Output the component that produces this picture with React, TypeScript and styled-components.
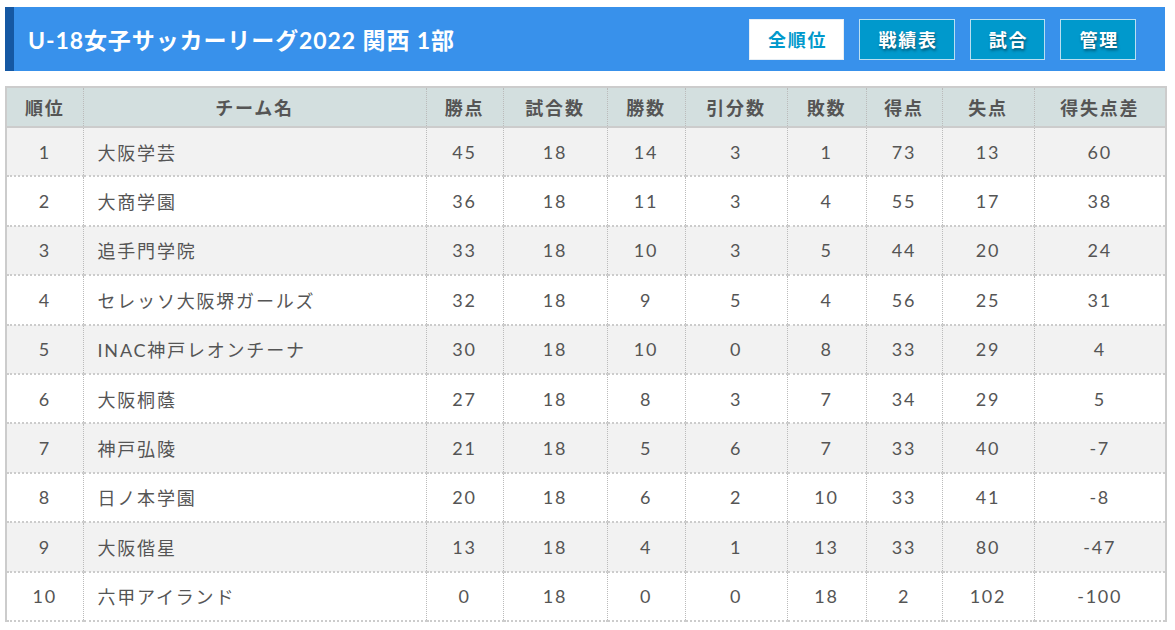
import React from 'react';
import styled, { createGlobalStyle } from 'styled-components';

const GlobalStyle = createGlobalStyle`
  body {
    margin: 0;
    background: #fff;
    font-family: Lato, "Noto Sans CJK JP", sans-serif;
  }
`;

const Page = styled.div`
  padding: 7px 10px 0 5px;
  width: 1160px;
`;

const TitleBar = styled.div`
  display: flex;
  align-items: center;
  justify-content: space-between;
  height: 64px;
  background: #3891eb;
  border-left: 9px solid #1558a3;
  padding: 0 29px 0 14px;
`;

const Title = styled.h1`
  margin: 0;
  color: #fff;
  font-size: 23px;
  font-weight: 700;
  letter-spacing: 0.9px;
`;

const Nav = styled.div`
  display: flex;
  gap: 15px;
`;

const NavButton = styled.a<{ $active?: boolean }>`
  display: flex;
  align-items: center;
  justify-content: center;
  height: 41px;
  padding: 0 16px 0 18px;
  box-sizing: border-box;
  font-size: 18px;
  font-weight: 700;
  letter-spacing: 1.8px;
  border: 1px solid ${(p) => (p.$active ? '#e6eef5' : '#b8dff2')};
  background: ${(p) => (p.$active ? '#fff' : '#0099cc')};
  color: ${(p) => (p.$active ? '#0099cc' : '#fff')};
  text-shadow: ${(p) => (p.$active ? 'none' : '1px 2px 3px rgba(0,0,0,0.45)')};
`;

const Table = styled.table`
  margin-top: 15px;
  width: 1160px;
  table-layout: fixed;
  border-collapse: collapse;
  border: 2px solid #cccccc;
  border-bottom: none;
  color: #555;
  font-size: 18px;
  letter-spacing: 1.8px;
`;

const HeadCell = styled.th`
  height: 38px;
  padding: 0;
  background: #d3dfdf;
  font-weight: 700;
  text-align: center;
  border-bottom: 2px solid #cccccc;
  border-left: 1px dotted #bbbbbb;
  &:first-child { border-left: none; }
`;

const Row = styled.tr<{ $odd: boolean }>`
  background: ${(p) => (p.$odd ? '#f2f2f2' : '#ffffff')};
`;

const Cell = styled.td<{ $left?: boolean }>`
  height: 47.4px;
  padding: 0 0 0 ${(p) => (p.$left ? '14px' : '0')};
  text-align: ${(p) => (p.$left ? 'left' : 'center')};
  border-bottom: 2px dotted #cccccc;
  border-left: 1px dotted #bbbbbb;
  &:first-child { border-left: none; }
`;

const widths = [77, 343, 77, 104, 78, 102, 79, 76, 92, 132];
const heads = ['順位', 'チーム名', '勝点', '試合数', '勝数', '引分数', '敗数', '得点', '失点', '得失点差'];

const rows: (string | number)[][] = [
  [1, '大阪学芸', 45, 18, 14, 3, 1, 73, 13, 60],
  [2, '大商学園', 36, 18, 11, 3, 4, 55, 17, 38],
  [3, '追手門学院', 33, 18, 10, 3, 5, 44, 20, 24],
  [4, 'セレッソ大阪堺ガールズ', 32, 18, 9, 5, 4, 56, 25, 31],
  [5, 'INAC神戸レオンチーナ', 30, 18, 10, 0, 8, 33, 29, 4],
  [6, '大阪桐蔭', 27, 18, 8, 3, 7, 34, 29, 5],
  [7, '神戸弘陵', 21, 18, 5, 6, 7, 33, 40, -7],
  [8, '日ノ本学園', 20, 18, 6, 2, 10, 33, 41, -8],
  [9, '大阪偕星', 13, 18, 4, 1, 13, 33, 80, -47],
  [10, '六甲アイランド', 0, 18, 0, 0, 18, 2, 102, -100],
];

const App = () => {
  return (
    <Page>
      <GlobalStyle />
      <TitleBar>
        <Title>U-18女子サッカーリーグ2022 関西 1部</Title>
        <Nav>
          <NavButton $active>全順位</NavButton>
          <NavButton>戦績表</NavButton>
          <NavButton>試合</NavButton>
          <NavButton>管理</NavButton>
        </Nav>
      </TitleBar>
      <Table>
        <colgroup>
          {widths.map((w, i) => (
            <col key={i} style={{ width: w }} />
          ))}
        </colgroup>
        <thead>
          <tr>
            {heads.map((h) => (
              <HeadCell key={h}>{h}</HeadCell>
            ))}
          </tr>
        </thead>
        <tbody>
          {rows.map((r, i) => (
            <Row key={i} $odd={i % 2 === 0}>
              {r.map((v, j) => (
                <Cell key={j} $left={j === 1}>
                  {v}
                </Cell>
              ))}
            </Row>
          ))}
        </tbody>
      </Table>
    </Page>
  );
};

export default App;
